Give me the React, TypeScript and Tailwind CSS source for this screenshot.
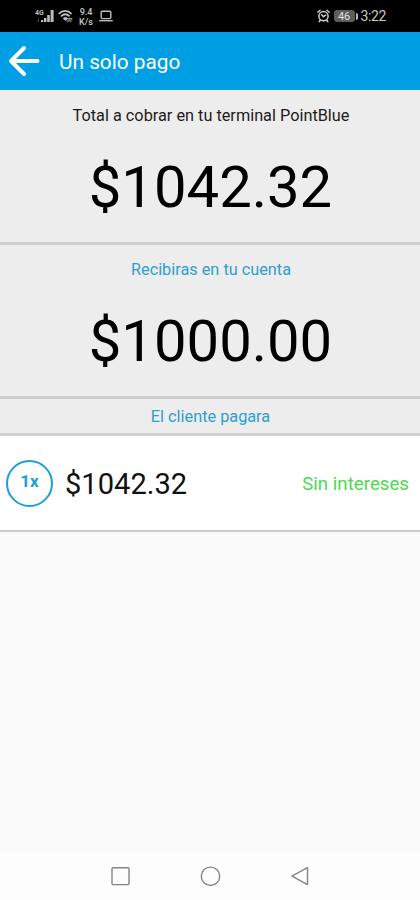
import React from 'react';

const SignalIcon: React.FC = () => (
  <svg width="20" height="14" viewBox="0 0 20 14" fill="#bdbdbd">
    <text x="0" y="5.6" fontSize="7" fontWeight="700" fontFamily="Roboto, sans-serif">4G</text>
    <path d="M3.4 8.5v4.5M1.8 11.4l1.6 1.6" stroke="#444444" strokeWidth="0.9" fill="none" />
    <rect x="6" y="11" width="2.2" height="2" />
    <rect x="9" y="9" width="2.4" height="4" />
    <rect x="12.2" y="6" width="2.6" height="7" />
    <rect x="15.6" y="1" width="3" height="12" />
  </svg>
);

const WifiIcon: React.FC = () => (
  <svg width="16" height="14" viewBox="0 0 16 14" fill="none" stroke="#bdbdbd" strokeWidth="1.7">
    <path d="M0.8 4.8C4.4 1 9.8 1 13.6 4.8" />
    <path d="M3 7.4C5.8 4.6 8.8 4.6 11.6 7.4" />
    <path d="M5.2 9.4c1.4-1.4 2.9-1.4 4.3 0L7.4 11.6z" fill="#bdbdbd" strokeWidth="0.8" />
    <path d="M9.5 9.9h4.8M8.5 12h5" strokeWidth="1.2" />
  </svg>
);

const LaptopIcon: React.FC = () => (
  <svg width="14" height="12" viewBox="0 0 14 12" fill="none" stroke="#bdbdbd" strokeWidth="1.4">
    <rect x="2.2" y="1.2" width="9.6" height="7.4" rx="1" />
    <path d="M0.2 10.7h13.6" />
  </svg>
);

const AlarmIcon: React.FC = () => (
  <svg width="13" height="14" viewBox="0 0 13 14" fill="none" stroke="#d0d0d0" strokeWidth="1.5" strokeLinecap="round">
    <circle cx="6.5" cy="7.2" r="4.6" />
    <path d="M0.9 3.2L3 1.3M12.1 3.2L10 1.3M6.5 7.6L4.6 5.8M6.5 7.6L8.6 6.2M3.2 11.2L2.2 12.6M9.8 11.2l1 1.4" />
  </svg>
);

const StatusBar: React.FC = () => (
  <div className="flex h-8 items-center bg-black pr-[34px] pl-[35px] text-[#c8c8c8]">
    <SignalIcon />
    <div className="ml-[3px]">
      <WifiIcon />
    </div>
    <div className="ml-[4px] w-[16px] pt-px text-center text-[9px] leading-[10px] font-medium">
      <div>9.4</div>
      <div>K/s</div>
    </div>
    <div className="ml-[5px]">
      <LaptopIcon />
    </div>
    <div className="ml-auto flex items-center">
      <AlarmIcon />
      <div className="ml-[4px] flex h-[12px] w-[21px] items-center justify-center rounded-[3px] bg-[#5c5c5c] text-[11px] leading-none text-[#e0e0e0]">
        46
      </div>
      <div className="ml-px h-[7px] w-[2px] rounded-r-sm bg-[#c0c0c0]"></div>
      <span className="ml-[3px] text-[14px] leading-4 tracking-[-0.4px]">3:22</span>
    </div>
  </div>
);

const Header: React.FC = () => (
  <header className="flex h-[58px] items-center bg-[#009fe3] pl-[8px] text-white">
    <svg width="32" height="32" viewBox="0 0 32 32" fill="none" stroke="currentColor" strokeWidth="4" strokeLinecap="round" strokeLinejoin="round">
      <path d="M29.5 16H3M16 3L3 16l13 13" />
    </svg>
    <h1 className="ml-[19px] pt-px text-[20.8px] leading-6">Un solo pago</h1>
  </header>
);

interface TotalProps {
  label: string;
  amount: string;
  labelClass: string;
}

const Total: React.FC<TotalProps> = ({ label, amount, labelClass }) => (
  <section className="h-[154px] border-b-[3px] border-[#cfcfcf] text-center">
    <p className={`h-[50px] pl-[2px] text-[16.3px] leading-[49px] ${labelClass}`}>{label}</p>
    <p className="pl-px text-[58px] leading-[93px] text-black">{amount}</p>
  </section>
);

const NavBar: React.FC = () => (
  <nav className="mt-auto flex h-[48px] items-center justify-center bg-[#fdfdfd]">
    <svg width="420" height="48" viewBox="0 0 420 48" fill="none" stroke="#858585" strokeWidth="1.4" strokeLinejoin="round">
      <rect x="112" y="15.8" width="17" height="16.8" rx="1" />
      <circle cx="210.5" cy="24.3" r="9.2" />
      <path d="M307.5 15.6v17L292 24.2z" />
    </svg>
  </nav>
);

const App: React.FC = () => {
  return (
    <div className="flex h-[900px] w-[420px] flex-col bg-[#fafafa] font-['Roboto',sans-serif]">
      <StatusBar />
      <Header />
      <main className="bg-[#ededed] pt-px">
        <Total label="Total a cobrar en tu terminal PointBlue" amount="$1042.32" labelClass="text-[#1c1c1c]" />
        <Total label="Recibiras en tu cuenta" amount="$1000.00" labelClass="text-[#2d9fd0]" />
        <p className="h-[37px] border-b-[3px] border-[#d0d0d0] pl-px text-center text-[16.3px] leading-[36px] text-[#2d9fd0]">
          El cliente pagara
        </p>
        <div className="flex h-[96px] items-center border-b-2 border-[#cbcbcb] bg-white pr-[11px] pl-[6px]">
          <div className="flex h-[47px] w-[47px] items-center justify-center rounded-full border-2 border-[#1a9fdb] pb-[3px] text-[17px] font-bold text-[#1a9fdb]">
            1x
          </div>
          <span className="ml-[12px] pt-[2px] text-[29.1px] leading-9 text-[#111111]">$1042.32</span>
          <span className="ml-auto pt-px text-[18.7px] leading-6 text-[#4fd854]">Sin intereses</span>
        </div>
      </main>
      <NavBar />
    </div>
  );
};

export default App;
